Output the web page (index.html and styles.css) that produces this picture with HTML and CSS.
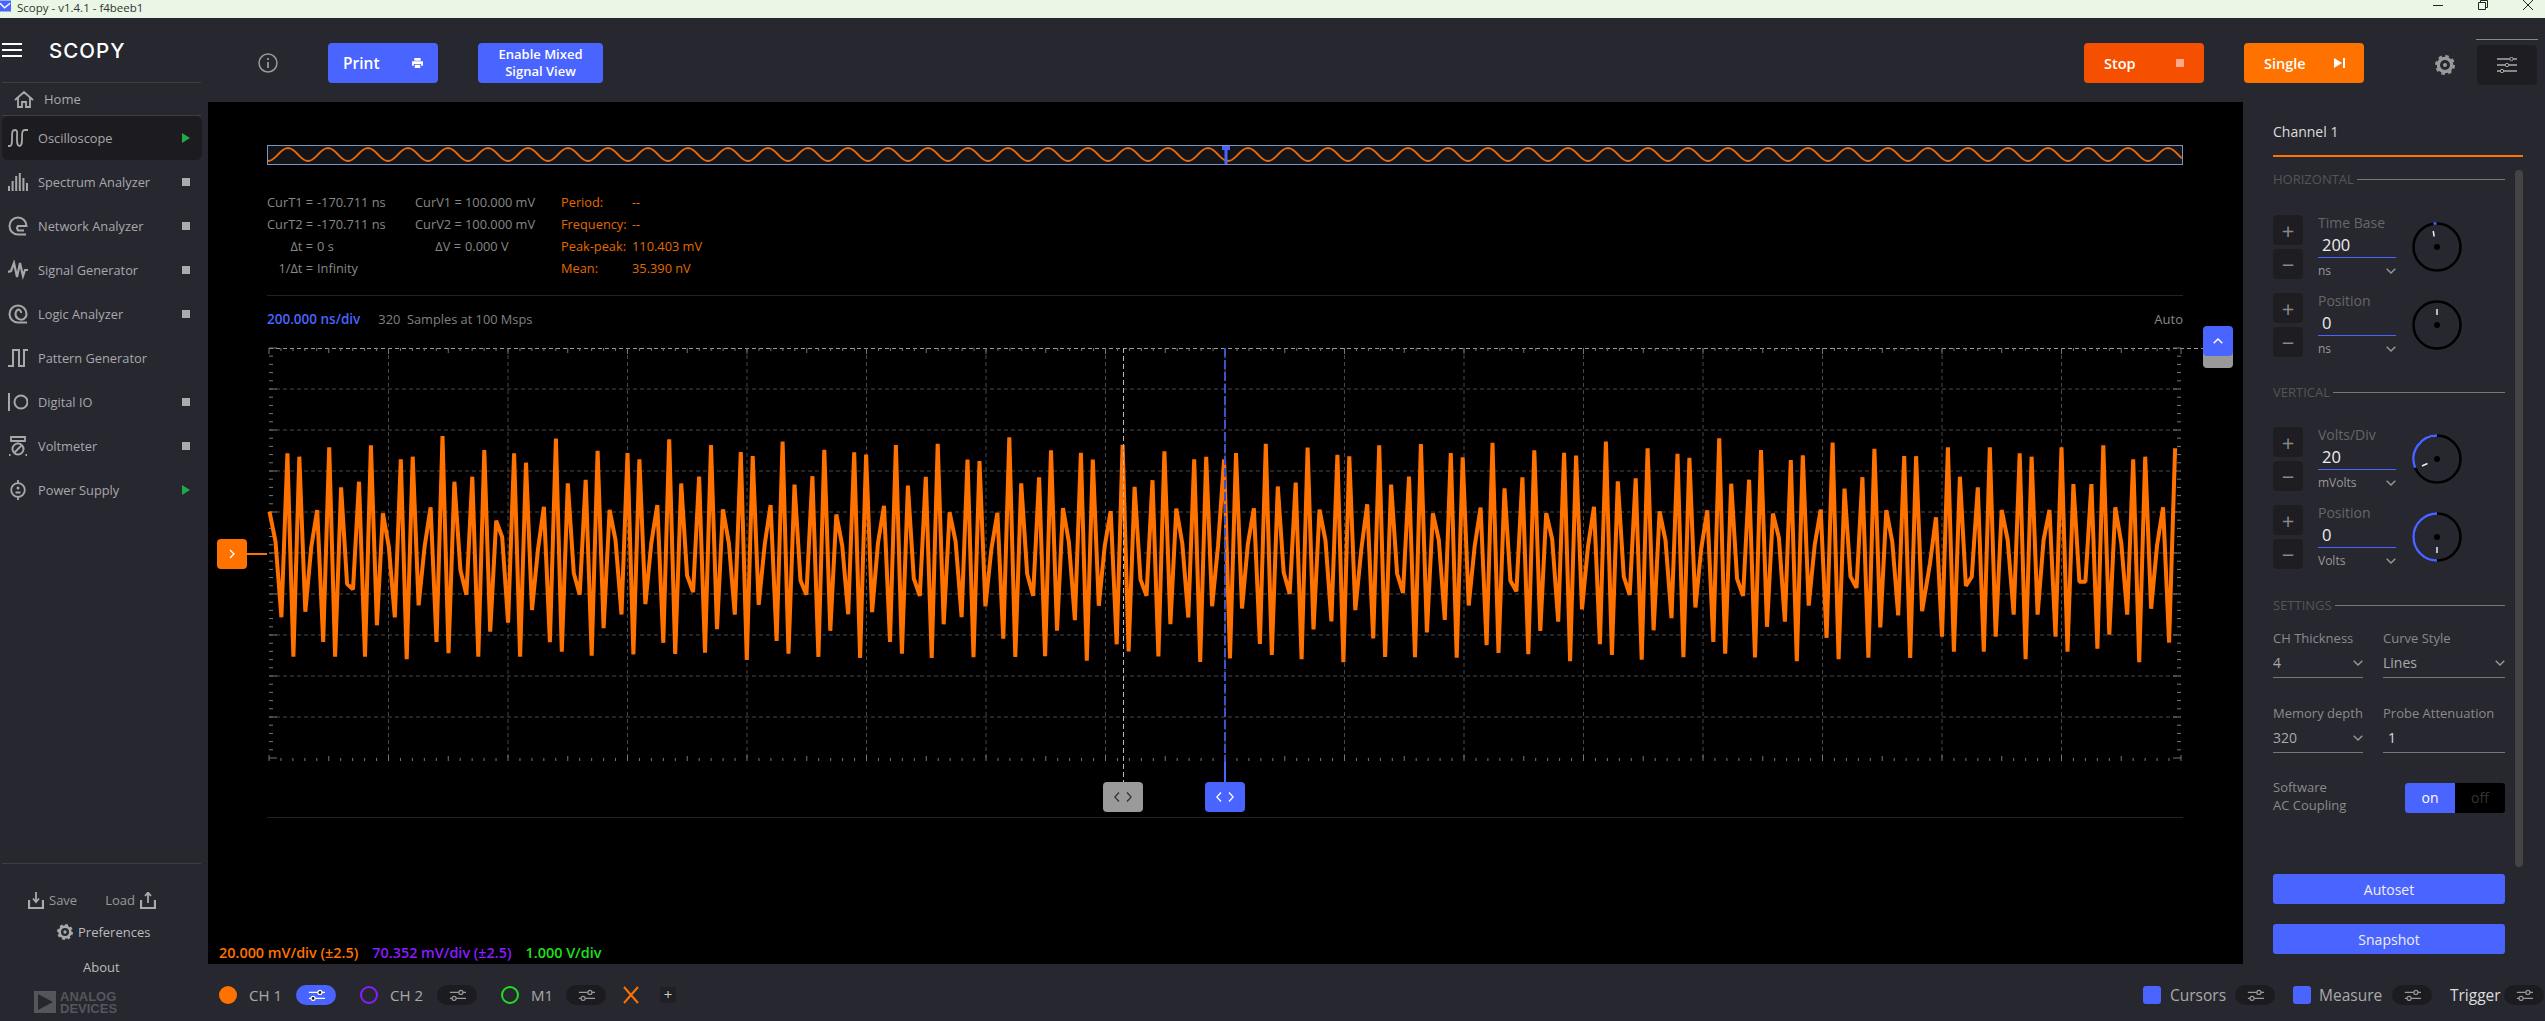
FILE: index.html
```html
<!DOCTYPE html>
<html lang="en">
<head>
<meta charset="utf-8">
<title>Scopy - v1.4.1 - f4beeb1</title>
<link rel="stylesheet" href="styles.css">
</head>
<body>
<svg class="defs" width="0" height="0" aria-hidden="true">
  <symbol id="i-sliders" viewBox="0 0 20 14"><path d="M1 4H20M1 11H20" stroke="currentColor" stroke-width="1.5" fill="none"/><circle cx="14" cy="4" r="2.4" fill="#1e1e22" stroke="currentColor" stroke-width="1.4"/><circle cx="6" cy="11" r="2.4" fill="#1e1e22" stroke="currentColor" stroke-width="1.4"/></symbol>
  <symbol id="i-gear" viewBox="0 0 24 24"><circle cx="12" cy="12" r="8" fill="none" stroke="currentColor" stroke-width="4"/><circle cx="12" cy="12" r="10.5" fill="none" stroke="currentColor" stroke-width="3" stroke-dasharray="4.2 4.05"/><circle cx="12" cy="12" r="2.5" fill="currentColor"/></symbol>
  <symbol id="i-chev" viewBox="0 0 10 6"><path d="M.7.7 5 5 9.3.7" fill="none" stroke="currentColor" stroke-width="1.4"/></symbol>
  <symbol id="i-scope" viewBox="0 0 20 18"><path d="M0 17h2c2 0 2-3 2-8 0-5 0-8 3-8s2 3 2 8c0 5 0 8 2.500 8s2.500-3 2.500-8c0-5 0-8 3-8h3" fill="none" stroke="currentColor" stroke-width="1.800"/></symbol>
  <symbol id="i-spectrum" viewBox="0 0 20 18"><path d="M0 13h2v5H0zM3.600 8h2v10h-2zM7.200 3h2v15h-2zM10.800 0h2v18h-2zM14.400 5h2v13h-2zM18 10h2v8h-2z" fill="currentColor"/></symbol>
  <symbol id="i-network" viewBox="0 0 20 20"><path d="M18 18.500H10A8.500 8.500 0 1 1 18.500 10H10A3.500 3.500 0 0 0 10 14.500H16" fill="none" stroke="currentColor" stroke-width="2"/></symbol>
  <symbol id="i-signal" viewBox="0 0 20 18"><path d="M0 11 3 10 6 2 9 16 12 2 15 15 17 9H20" fill="none" stroke="currentColor" stroke-width="2.200"/></symbol>
  <symbol id="i-logic" viewBox="0 0 20 20"><path d="M19 18.500H10A8.500 8.500 0 1 1 18.500 10 5.500 5.500 0 1 1 10 5.500 3 3 0 0 1 13 9" fill="none" stroke="currentColor" stroke-width="2"/></symbol>
  <symbol id="i-pattern" viewBox="0 0 20 18"><path d="M0 17H5V1H11V17H16V1H20" fill="none" stroke="currentColor" stroke-width="2"/></symbol>
  <symbol id="i-digital" viewBox="0 0 20 18"><path d="M1 0V18" stroke="currentColor" stroke-width="2"/><circle cx="13" cy="9" r="6.500" fill="none" stroke="currentColor" stroke-width="2"/></symbol>
  <symbol id="i-volt" viewBox="0 0 20 20"><path d="M3 1H17V5H3z" fill="none" stroke="currentColor" stroke-width="1.800"/><circle cx="10" cy="13" r="5.500" fill="none" stroke="currentColor" stroke-width="2"/><path d="M6 17 14 9M1 19H2.500M17.500 19H19" stroke="currentColor" stroke-width="1.800"/></symbol>
  <symbol id="i-power" viewBox="0 0 20 20"><circle cx="10" cy="10" r="6.800" fill="none" stroke="currentColor" stroke-width="1.800"/><path d="M10 0V3M10 17V20M7.500 12.500H12.500" stroke="currentColor" stroke-width="1.800"/><circle cx="10" cy="8" r="1.500" fill="currentColor"/></symbol>
  <symbol id="i-tray-down" viewBox="0 0 16 17"><path d="M1 8V16H15V8" fill="none" stroke="currentColor" stroke-width="2.200"/><path d="M8 0V9M5 6.500 8 10 11 6.500" fill="none" stroke="currentColor" stroke-width="1.800"/></symbol>
  <symbol id="i-tray-up" viewBox="0 0 16 17"><path d="M1 8V16H15V8" fill="none" stroke="currentColor" stroke-width="2.200"/><path d="M8 11V1M5 4 8 .5 11 4" fill="none" stroke="currentColor" stroke-width="1.800"/></symbol>
</svg>

<header class="titlebar">
  <svg class="app-icon" viewBox="0 0 12 12"><rect width="12" height="12" fill="#4a64ff"/><path d="M0 3 5 8 11 3" fill="none" stroke="#fff" stroke-width="1.500"/></svg>
  <span class="title-text">Scopy - v1.4.1 - f4beeb1</span>
  <div class="win-controls">
    <svg viewBox="0 0 10 10"><path d="M0 5.500H10" stroke="#222" fill="none"/></svg>
    <svg viewBox="0 0 10 10"><path d="M.5 2.500H7.500V9.500H.5zM2.500 2.500V.5H9.500V7.500H7.500" stroke="#222" fill="none"/></svg>
    <svg viewBox="0 0 10 10"><path d="M0 0 10 10M10 0 0 10" stroke="#222" fill="none"/></svg>
  </div>
</header>

<div class="app">
  <aside class="sidebar">
    <div class="brand">
      <div class="burger"><i></i><i></i><i></i></div>
      <span class="logo">SCOPY</span>
    </div>
    <div class="home-row">
      <svg class="home-icon" viewBox="0 0 20 17"><path d="M1 9 10 1 19 9M4 7V16H8V11H12V16H16V7" fill="none" stroke="currentColor" stroke-width="1.800"/></svg>
      <span>Home</span>
    </div>
    <nav class="nav">
      <div class="nav-item active"><svg class="nav-icon"><use href="#i-scope"/></svg><span>Oscilloscope</span><b class="state run"></b></div>
      <div class="nav-item"><svg class="nav-icon"><use href="#i-spectrum"/></svg><span>Spectrum Analyzer</span><b class="state"></b></div>
      <div class="nav-item"><svg class="nav-icon"><use href="#i-network"/></svg><span>Network Analyzer</span><b class="state"></b></div>
      <div class="nav-item"><svg class="nav-icon"><use href="#i-signal"/></svg><span>Signal Generator</span><b class="state"></b></div>
      <div class="nav-item"><svg class="nav-icon"><use href="#i-logic"/></svg><span>Logic Analyzer</span><b class="state"></b></div>
      <div class="nav-item"><svg class="nav-icon"><use href="#i-pattern"/></svg><span>Pattern Generator</span></div>
      <div class="nav-item"><svg class="nav-icon"><use href="#i-digital"/></svg><span>Digital IO</span><b class="state"></b></div>
      <div class="nav-item"><svg class="nav-icon"><use href="#i-volt"/></svg><span>Voltmeter</span><b class="state"></b></div>
      <div class="nav-item"><svg class="nav-icon"><use href="#i-power"/></svg><span>Power Supply</span><b class="state run"></b></div>
    </nav>
    <div class="side-foot">
      <div class="save-row">
        <svg class="tray"><use href="#i-tray-down"/></svg><span>Save</span>
        <span class="load">Load</span><svg class="tray"><use href="#i-tray-up"/></svg>
      </div>
      <div class="pref-row"><svg class="pref-gear"><use href="#i-gear"/></svg><span>Preferences</span></div>
      <div class="about-row">About</div>
      <div class="adi">
        <svg class="adi-mark" viewBox="0 0 22 22"><path d="M0 0H22V22H0zM4 3V19L19 11z" fill="#55565c" fill-rule="evenodd"/></svg>
        <span class="adi-text">ANALOG<br>DEVICES</span>
      </div>
    </div>
  </aside>

  <div class="main">
    <div class="topbar">
      <svg class="info-icon" viewBox="0 0 20 20"><circle cx="10" cy="10" r="9" fill="none" stroke="currentColor" stroke-width="1.500"/><path d="M10 9V15M10 5V7" stroke="currentColor" stroke-width="1.800"/></svg>
      <button class="btn blue print"><span>Print</span><svg viewBox="0 0 12 11"><path d="M2.500 0H9.500V3H2.500zM0 3.500H12V8.500H10V6.500H2V8.500H0zM3 7.500H9V11H3z" fill="#fff"/></svg></button>
      <button class="btn blue mixed">Enable Mixed<br>Signal View</button>
      <div class="top-spacer"></div>
      <button class="btn stop"><span>Stop</span><i class="stop-square"></i></button>
      <button class="btn single"><span>Single</span><svg viewBox="0 0 11 10"><path d="M0 0 8 5 0 10zM9 0H11V10H9z" fill="#fff"/></svg></button>
      <svg class="top-gear"><use href="#i-gear"/></svg>
      <div class="menu-wrap"><div class="menu-btn"><svg viewBox="0 0 20 16"><path d="M0 2H20M0 8H20M0 14H20" stroke="#aaa" stroke-width="1.300"/><circle cx="14.500" cy="2" r="1.700" fill="#1e1e22" stroke="#aaa"/><circle cx="10" cy="8" r="1.700" fill="#1e1e22" stroke="#aaa"/><circle cx="5" cy="14" r="1.700" fill="#1e1e22" stroke="#aaa"/></svg></div></div>
    </div>

    <div class="content">
      <section class="plot">
        <svg id="chart" class="chart" viewBox="208 102 2035 862"></svg>
        <div class="readouts">
          <dl class="cursor-col first">
            <dt>CurT1 =</dt><dd>-170.711 ns</dd>
            <dt>CurT2 =</dt><dd>-170.711 ns</dd>
            <dt>Δt =</dt><dd>0 s</dd>
            <dt>1/Δt =</dt><dd>Infinity</dd>
          </dl>
          <dl class="cursor-col second">
            <dt>CurV1 =</dt><dd>100.000 mV</dd>
            <dt>CurV2 =</dt><dd>100.000 mV</dd>
            <dt>ΔV =</dt><dd>0.000 V</dd>
          </dl>
          <dl class="measure-col">
            <dt>Period:</dt><dd>--</dd>
            <dt>Frequency:</dt><dd>--</dd>
            <dt>Peak-peak:</dt><dd>110.403 mV</dd>
            <dt>Mean:</dt><dd>35.390 nV</dd>
          </dl>
        </div>
        <div class="plot-head">
          <strong>200.000 ns/div</strong>
          <span class="samples">320&nbsp; Samples at 100 Msps</span>
          <span class="auto">Auto</span>
        </div>
        <div class="scales">
          <span class="c-orange">20.000 mV/div (±2.5)</span>
          <span class="c-purple">70.352 mV/div (±2.5)</span>
          <span class="c-green">1.000 V/div</span>
        </div>
        <div class="handle h-trig"><svg viewBox="0 0 10 6"><use href="#i-chev" transform="rotate(180 5 3)"/></svg></div>
        <div class="handle h-trig-back"></div>
        <div class="handle h-level"><svg viewBox="0 0 6 10"><path d="M1 1 5 5 1 9" fill="none" stroke="#fff" stroke-width="1.300"/></svg></div>
        <div class="handle h-gray"><svg viewBox="0 0 18 10"><path d="M5 .5 .8 5 5 9.500M13 .5 17.200 5 13 9.500" fill="none" stroke="#333" stroke-width="1.300"/></svg></div>
        <div class="handle h-blue"><svg viewBox="0 0 18 10"><path d="M5 .5 .8 5 5 9.500M13 .5 17.200 5 13 9.500" fill="none" stroke="#fff" stroke-width="1.300"/></svg></div>
      </section>

      <aside class="panel">
        <div class="panel-title">Channel 1</div>
        <i class="scrollbar"></i>
        <div class="heading first"><span>HORIZONTAL</span></div>
        <div class="spin-row">
          <div class="stepper"><button>+</button><button>−</button></div>
          <div class="field"><label>Time Base</label><div class="value">200</div><div class="unit"><span>ns</span><svg><use href="#i-chev"/></svg></div></div>
          <svg class="dial" viewBox="-26 -26 52 52"><circle r="23.500" class="ring"/><path d="M-3.500 -23.500H-.5" class="arc"/><path d="M-3.800 -16-2.800 -10.500" class="tick"/><circle r="3"/></svg>
        </div>
        <div class="spin-row">
          <div class="stepper"><button>+</button><button>−</button></div>
          <div class="field"><label>Position</label><div class="value">0</div><div class="unit"><span>ns</span><svg><use href="#i-chev"/></svg></div></div>
          <svg class="dial" viewBox="-26 -26 52 52"><circle r="23.500" class="ring"/><path d="M0 -16V-10" class="tick"/><circle r="3"/></svg>
        </div>
        <div class="heading"><span>VERTICAL</span></div>
        <div class="spin-row">
          <div class="stepper"><button>+</button><button>−</button></div>
          <div class="field"><label>Volts/Div</label><div class="value">20</div><div class="unit"><span>mVolts</span><svg><use href="#i-chev"/></svg></div></div>
          <svg class="dial" viewBox="-26 -26 52 52"><circle r="23.500" class="ring"/><path d="M0 -23.500A23.500 23.500 0 0 0 -21.800 8.700" class="arc"/><path d="M-15 7-9.500 4.500" class="tick"/><circle r="3"/></svg>
        </div>
        <div class="spin-row">
          <div class="stepper"><button>+</button><button>−</button></div>
          <div class="field"><label>Position</label><div class="value">0</div><div class="unit"><span>Volts</span><svg><use href="#i-chev"/></svg></div></div>
          <svg class="dial" viewBox="-26 -26 52 52"><circle r="23.500" class="ring"/><path d="M0 -23.500A23.500 23.500 0 0 0 0 23.500" class="arc"/><path d="M0 10V16" class="tick"/><circle r="3"/></svg>
        </div>
        <div class="heading third"><span>SETTINGS</span></div>
        <div class="settings">
          <div class="select"><label>CH Thickness</label><div class="sel-val"><span>4</span><svg><use href="#i-chev"/></svg></div></div>
          <div class="select"><label>Curve Style</label><div class="sel-val"><span>Lines</span><svg><use href="#i-chev"/></svg></div></div>
          <div class="select"><label>Memory depth</label><div class="sel-val"><span>320</span><svg><use href="#i-chev"/></svg></div></div>
          <div class="select"><label>Probe Attenuation</label><div class="sel-val plain"><span>1</span></div></div>
        </div>
        <div class="coupling">
          <span>Software<br>AC Coupling</span>
          <div class="switch"><b>on</b><em>off</em></div>
        </div>
        <button class="wide first-wide">Autoset</button>
        <button class="wide">Snapshot</button>
      </aside>
    </div>

    <footer class="bottombar">
      <i class="dot"></i><span class="ch">CH 1</span>
      <span class="pill on spaced"><svg><use href="#i-sliders"/></svg></span>
      <i class="ring-dot purple"></i><span class="ch">CH 2</span>
      <span class="pill spaced"><svg><use href="#i-sliders"/></svg></span>
      <i class="ring-dot green"></i><span class="ch">M1</span>
      <span class="pill"><svg><use href="#i-sliders"/></svg></span>
      <svg class="math-x" viewBox="0 0 16 18"><path d="M1 1 15 17M15 1 1 17" stroke="#ff7200" stroke-width="2" fill="none"/></svg>
      <span class="add">+</span>
      <div class="bot-spacer"></div>
      <i class="check"></i><span class="tool cursors">Cursors</span>
      <span class="pill"><svg><use href="#i-sliders"/></svg></span>
      <i class="check"></i><span class="tool measure">Measure</span>
      <span class="pill"><svg><use href="#i-sliders"/></svg></span>
      <span class="tool trigger">Trigger</span>
      <span class="pill"><svg><use href="#i-sliders"/></svg></span>
    </footer>
  </div>
</div>
<script src="chart.js"></script>
</body>
</html>
```
FILE: styles.css
```css
* { box-sizing: border-box; }
html, body { margin: 0; height: 1021px; overflow: hidden; background: #000; }
body { font-family: "Open Sans", "Liberation Sans", sans-serif; font-size: 13px; color: #aaa; }
.defs { position: absolute; }
button { font-family: inherit; border: 0; padding: 0; color: #fff; cursor: pointer; }

/* title bar */
.titlebar { height: 18px; background: #eaf7e6; display: flex; align-items: center; }
.app-icon { width: 11px; height: 12px; margin: -6px 6px 0 0; }
.title-text { font-size: 11.5px; color: #333; line-height: 18px; margin-top: -3px; }
.win-controls { margin-left: auto; display: flex; gap: 35px; padding-right: 12px; margin-top: -8px; }
.win-controls svg { width: 10px; height: 10px; }

/* application frame */
.app { display: flex; height: 1003px; }
.sidebar { width: 208px; flex: none; background: #272730; display: flex; flex-direction: column; }
.brand { height: 65px; margin: 0 7px 0 2px; border-bottom: 1px solid #3d3d42; display: flex; padding-top: 25px; }
.burger { width: 20px; height: 14px; display: flex; flex-direction: column; justify-content: space-between; }
.burger i { display: block; height: 2px; background: #fff; }
.logo { margin-left: 27px; font-family: Inter, sans-serif; font-weight: 500; font-size: 20.5px; line-height: 15px; letter-spacing: 1px; color: #fff; }
.home-row { height: 33px; margin: 0 7px 0 2px; border-bottom: 1px solid #3d3d42; display: flex; align-items: center; gap: 10px; padding-left: 12px; }
.home-icon { width: 20px; height: 17px; color: #aaa; }
.nav { display: flex; flex-direction: column; }
.nav-item { height: 44px; width: 200px; margin-left: 2px; padding: 0 12px 0 6px; display: flex; align-items: center; gap: 10px; font-size: 12.800px; color: #a8a8ac; }
.nav-item.active { background: #1c1c20; border-radius: 6px; }
.nav-icon { width: 20px; height: 20px; color: #a8a8a8; flex: none; }
.state { margin-left: auto; width: 8px; height: 8px; background: #aaa; }
.state.run { background: #22a84a; height: 10px; clip-path: polygon(0 0, 100% 50%, 0 100%); }
.side-foot { margin-top: auto; height: 158px; position: relative; }
.side-foot::before { content: ""; display: block; height: 1px; margin: 0 7px 0 2px; background: #3d3d42; }
.save-row { margin-top: 24px; padding-left: 28px; height: 24px; display: flex; align-items: center; gap: 5px; color: #999; }
.tray { width: 16px; height: 17px; color: #aaa; }
.load { margin-left: 23px; }
.pref-row { margin-top: 8px; height: 24px; padding-left: 57px; display: flex; align-items: center; gap: 5px; color: #bbb; }
.pref-gear { width: 16px; height: 16px; color: #aaa; }
.about-row { margin-top: 11px; height: 24px; padding-left: 83px; line-height: 24px; color: #bbb; }
.adi { margin-top: 12px; padding-left: 34px; display: flex; gap: 4px; height: 22px; }
.adi-mark { width: 22px; height: 22px; }
.adi-text { font-family: "Liberation Sans", sans-serif; font-weight: 700; font-size: 13px; line-height: 11.500px; color: #55565c; }

/* top bar */
.main { flex: 1; min-width: 0; display: flex; flex-direction: column; }
.topbar { height: 84px; flex: none; background: #272730; display: flex; align-items: center; padding: 6px 0 0 50px; }
.info-icon { width: 20px; height: 20px; color: #999; margin-right: 50px; }
.btn { height: 40px; border-radius: 4px; display: flex; align-items: center; font-weight: 600; }
.blue { background: #4a64ff; }
.print { width: 110px; padding: 0 15px; justify-content: space-between; font-size: 15.500px; margin-right: 40px; }
.print svg { width: 11px; height: 10px; }
.mixed { width: 125px; justify-content: center; font-size: 13px; line-height: 17px; }
.top-spacer { flex: 1; }
.stop { width: 120px; background: #f55000; padding: 0 20px; justify-content: space-between; font-size: 14.500px; margin-right: 40px; }
.stop-square { width: 8px; height: 8px; background: #ffa98a; }
.single { width: 120px; background: #ff7200; padding: 0 19px 0 20px; justify-content: space-between; font-size: 14.500px; }
.single svg { width: 11px; height: 10px; }
.top-gear { width: 20px; height: 20px; color: #999; margin: 4px 21px 0 71px; }
.menu-wrap { width: 62px; margin-right: 7px; padding-top: 5px; height: 46px; border-top: 1px solid #888; margin-top: -3px; display: flex; justify-content: center; }
.menu-btn { width: 60px; height: 40px; background: #1e1e22; border-radius: 4px; display: flex; align-items: center; justify-content: center; }
.menu-btn svg { width: 20px; height: 16px; }

/* plot */
.content { flex: 1; min-height: 0; display: flex; }
.plot { position: relative; flex: 1; min-width: 0; background: #000; padding: 89px 60px 0 59px; display: flex; flex-direction: column; }
.chart { position: absolute; left: 0; top: 0; width: 2035px; height: 862px; }
.readouts { position: relative; display: flex; height: 88px; font-size: 12.800px; }
.readouts dl { margin: 0; display: grid; grid-auto-rows: 22px; align-items: center; color: #888; }
.readouts dd { margin: 0; white-space: nowrap; }
.cursor-col { grid-template-columns: 46px auto; column-gap: 4px; justify-content: start; align-content: start; }
.cursor-col dt { text-align: right; white-space: nowrap; }
.cursor-col.first { width: 148px; }
.cursor-col.second { width: 146px; }
.measure-col { grid-template-columns: 71px auto; align-content: start; }
.readouts .measure-col { color: #e06a00; }
.plot-head { position: relative; margin-top: 30px; height: 20px; display: flex; align-items: center; }
.plot-head strong { color: #4a64ff; font-size: 13.500px; font-weight: 600; margin-right: 18px; }
.samples { color: #808080; font-size: 12.800px; }
.auto { margin-left: auto; color: #888; }
.scales { position: absolute; left: 11px; top: 841px; display: flex; gap: 14px; font-size: 14.400px; font-weight: 600; white-space: nowrap; }
.c-orange { color: #ff7200; }
.c-purple { color: #8a1dff; }
.c-green { color: #1ee01e; }
.handle { position: absolute; display: flex; align-items: center; justify-content: center; border-radius: 4px; }
.h-trig { left: 1995px; top: 224px; width: 30px; height: 30px; background: #4a64ff; z-index: 1; }
.h-trig svg { width: 10px; height: 6px; color: #fff; }
.h-trig-back { left: 1995px; top: 246px; width: 30px; height: 20px; background: #999; }
.h-level { left: 9px; top: 437px; width: 30px; height: 30px; background: #ff7200; }
.h-level svg { width: 6px; height: 10px; }
.h-gray { left: 895px; top: 680px; width: 40px; height: 30px; background: #9a9a9a; }
.h-blue { left: 997px; top: 680px; width: 40px; height: 30px; background: #4a64ff; }
.h-gray svg, .h-blue svg { width: 18px; height: 10px; }

/* channel panel */
.panel { position: relative; width: 302px; flex: none; background: #272730; padding: 0 22px 0 30px; }
.panel-title { height: 55px; padding-top: 20px; line-height: 20px; font-size: 14px; color: #ddd; border-bottom: 2px solid #ff7200; }
.scrollbar { position: absolute; left: 272px; top: 68px; width: 8px; height: 697px; background: #444; border-radius: 4px; }
.heading { width: 232px; height: 20px; margin-top: 25px; display: flex; align-items: center; gap: 3px; font-size: 13px; color: #555; }
.heading.first { margin-top: 12px; }
.heading.third { margin-top: 26px; }
.heading::after { content: ""; flex: 1; height: 1px; background: #777; }
.heading.first + .spin-row { margin-top: 26px; }
.heading + .spin-row { margin-top: 25px; }
.spin-row { display: flex; height: 64px; margin-top: 14px; }
.stepper { width: 30px; display: flex; flex-direction: column; gap: 4px; }
.stepper button { height: 30px; background: #1e1e22; border-radius: 4px; font-size: 22px; line-height: 28px; color: #888; }
.field { width: 78px; margin: -1px 0 0 15px; }
.field label { display: block; height: 17px; font-size: 14px; line-height: 17px; color: #666; }
.value { height: 27px; padding: 3px 0 0 4px; border-bottom: 1.500px solid #4a64ff; font-size: 16.500px; line-height: 22px; color: #eee; }
.unit { display: flex; justify-content: space-between; align-items: center; height: 25px; font-size: 12px; color: #999; }
.unit svg, .sel-val svg { width: 10px; height: 6px; color: #999; }
.dial { width: 52px; height: 52px; margin: 6px 0 0 15px; }
.dial .ring { fill: none; stroke: #000; stroke-width: 2.500; }
.dial .arc { fill: none; stroke: #4a64ff; stroke-width: 2.500; }
.dial .tick { fill: none; stroke: #eee; stroke-width: 1.500; }
.settings { display: grid; grid-template-columns: 90px 122px; column-gap: 20px; row-gap: 25px; margin-top: 13px; width: 232px; }
.select label { display: block; height: 20px; line-height: 20px; font-size: 13px; color: #8a8a8a; white-space: nowrap; }
.sel-val { height: 30px; display: flex; justify-content: space-between; align-items: center; font-size: 14px; color: #aaa; border-bottom: 1px solid #777; }
.sel-val.plain { padding-left: 5px; color: #ddd; }
.coupling { width: 232px; margin-top: 19px; display: flex; justify-content: space-between; align-items: flex-start; font-size: 13px; line-height: 18px; color: #8a8a8a; }
.coupling > span { padding-top: 6px; }
.switch { width: 100px; height: 30px; display: flex; border-radius: 3px; overflow: hidden; background: #000; font-size: 14px; line-height: 30px; text-align: center; margin-top: 11px; }
.switch b { width: 50px; font-weight: 400; color: #fff; background: #4a64ff; }
.switch em { width: 50px; font-style: normal; color: #333; }
.wide { display: block; width: 232px; height: 30px; border-radius: 3px; background: #4a64ff; font-size: 14px; color: #eee; margin-top: 20px; }
.first-wide { margin-top: 60px; }

/* bottom bar */
.bottombar { height: 57px; flex: none; background: #272730; display: flex; align-items: center; padding: 5px 1px 0 11px; }
.dot { width: 18px; height: 18px; border-radius: 50%; background: #ff7200; flex: none; }
.ring-dot { width: 18px; height: 18px; border-radius: 50%; border: 2px solid; flex: none; margin-left: 24px; }
.ring-dot.purple { border-color: #8a1dff; }
.ring-dot.green { border-color: #1ee01e; }
.ch { width: 47px; padding-left: 12px; font-size: 15px; color: #aaa; white-space: nowrap; flex: none; }
.pill { width: 40px; height: 20px; flex: none; border-radius: 10px; background: #1c1c20; display: flex; align-items: center; justify-content: center; color: #999; }
.pill svg { width: 17px; height: 12px; }
.pill.on { background: #4a64ff; color: #fff; }
.pill.spaced { margin-left: 12px; }
.math-x { width: 16px; height: 18px; margin-left: 17px; flex: none; }
.add { width: 16px; height: 16px; margin-left: 21px; border-radius: 2px; background: #1f1f24; color: #ccc; font-size: 15px; line-height: 15px; text-align: center; }
.bot-spacer { flex: 1; }
.check { width: 18px; height: 18px; border-radius: 3px; background: #4a64ff; flex: none; margin-left: 18px; }
.tool { flex: none; font-size: 15.500px; font-weight: 500; color: #aaa; white-space: nowrap; }
.tool.cursors { width: 65px; margin-left: 9px; }
.tool.measure { width: 73px; margin-left: 8px; }
.tool.trigger { width: 54px; margin-left: 18px; color: #ddd; font-weight: 400; }
```
FILE: chart.js
```js
// Draws the scope canvas: grid, ticks, overview strip, sampled trace and cursors.
(function () {
  var head = [245,335,562,70,680,80,545,350,240,636,52,680,172,462,478,155,680,46,586,250,350,562,88,688,80,526,350,232,636,18,670,155,420,494,140,680,60,605,272,322,578,70,680,98];
  var tail = [400,262,620,52,665,140,468,440,172,665,52,620,240,330,554,70,688,80,554,330,240,620,52,665,162,455,455,162,656,46,614,232,340,554,88,697,80,536,345,232,638,55];
  var cycle = [247,335,562,78,684,80,535,350,236,636,35,675,165,440,486,148,680,53,595];
  var S = 5.966, X0 = 269.5, Y0 = 430;
  function jitter(k) { var v = Math.sin(k * 12.9898) * 43758.5453; return (v - Math.floor(v) - 0.5) * 26; }
  var pts = [];
  head.forEach(function (z, k) { pts.push([X0 + S * k, Y0 + z / 3]); });
  for (var k = head.length; k < 278; k++) {
    var phase = k < 160 ? k % 19 : (k + 14) % 19;
    pts.push([X0 + S * k, Y0 + (cycle[phase] + jitter(k)) / 3]);
  }
  tail.forEach(function (z, i) { pts.push([1930 + 5.977 * i, Y0 + z / 3]); });
  var trace = pts.map(function (p) { return p[0].toFixed(1) + ',' + p[1].toFixed(1); }).join(' ');

  var sine = [];
  for (var x = 268; x <= 2183; x += 2) {
    sine.push(x + ',' + (154.5 - 6.5 * Math.cos((x - 288) * Math.PI / 20)).toFixed(1));
  }

  var L = 269, R = 2181, T = 348, B = 758, DX = 119.5, DY = 41;
  var grid = '', ticks = '', i, t;
  for (i = 1; i < 16; i++) { t = L + DX * i; grid += 'M' + t + ' ' + T + 'V' + B; }
  for (i = 1; i < 10; i++) { t = T + DY * i; grid += 'M' + L + ' ' + t + 'H' + R; }
  for (i = 0; i <= 160; i++) {
    t = L + DX * i / 10;
    var h = i % 10 === 0 ? 6 : i % 5 === 0 ? 5 : 3;
    ticks += 'M' + t + ' ' + T + 'v' + h + 'M' + t + ' ' + (B + 3) + 'v-' + h;
  }
  for (i = 0; i <= 50; i++) {
    t = T + DY * i / 5;
    var w = i % 5 === 0 ? 8 : 4;
    ticks += 'M' + L + ' ' + t + 'h' + w + 'M' + R + ' ' + t + 'h-' + w;
  }

  document.getElementById('chart').innerHTML =
    '<rect x="267.500" y="145.500" width="1915" height="19" fill="#141418" stroke="#7a93c0"/>' +
    '<polyline points="' + sine.join(' ') + '" fill="none" stroke="#e06a10" stroke-width="1.800"/>' +
    '<path d="M1222 146h8v4h-2.500v14h-3v-14h-2.500z" fill="#4a64ff"/>' +
    '<path d="M267 295.500H2183M267 817.500H2183" stroke="#222"/>' +
    '<path d="' + grid + '" stroke="#484848" stroke-dasharray="4 3" fill="none"/>' +
    '<path d="M' + L + ' ' + (T + .5) + 'H2204" stroke="#999" stroke-dasharray="4 3" fill="none"/>' +
    '<path d="' + ticks + '" stroke="#777" fill="none"/>' +
    '<polyline points="' + trace + '" fill="none" stroke="#ff7200" stroke-width="4" stroke-linejoin="bevel"/>' +
    '<path d="M1123.500 348V782" stroke="#bbb" stroke-dasharray="5 3" fill="none"/>' +
    '<path d="M1225 348V762" stroke="#3d52cc" stroke-width="2" stroke-dasharray="9 3" fill="none"/>' +
    '<path d="M1225 762V782" stroke="#4a64ff" stroke-width="2" fill="none"/>' +
    '<path d="M246 554H267" stroke="#ff7200" stroke-width="2" fill="none"/>';
})();
```
